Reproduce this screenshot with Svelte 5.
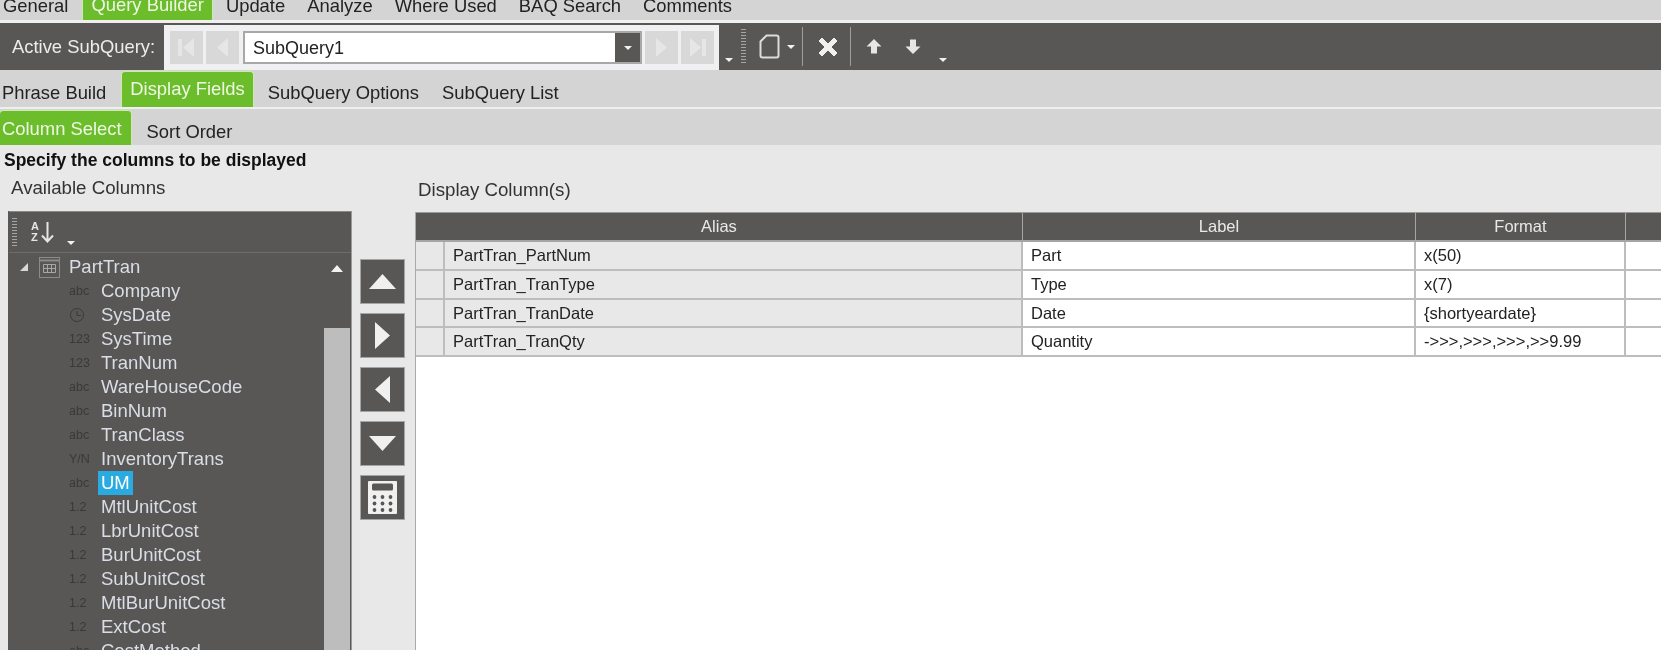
<script>
  const topTabs = ['General', 'Query Builder', 'Update', 'Analyze', 'Where Used', 'BAQ Search', 'Comments'];
  const subTabs = ['Phrase Build', 'Display Fields', 'SubQuery Options', 'SubQuery List'];
  const selectTabs = ['Column Select', 'Sort Order'];

  const columns = [
    ['abc', 'Company'], ['clock', 'SysDate'], ['123', 'SysTime'], ['123', 'TranNum'],
    ['abc', 'WareHouseCode'], ['abc', 'BinNum'], ['abc', 'TranClass'], ['Y/N', 'InventoryTrans'],
    ['abc', 'UM'], ['1.2', 'MtlUnitCost'], ['1.2', 'LbrUnitCost'], ['1.2', 'BurUnitCost'],
    ['1.2', 'SubUnitCost'], ['1.2', 'MtlBurUnitCost'], ['1.2', 'ExtCost'], ['abc', 'CostMethod']
  ];

  const rows = [
    ['PartTran_PartNum', 'Part', 'x(50)'],
    ['PartTran_TranType', 'Type', 'x(7)'],
    ['PartTran_TranDate', 'Date', '{shortyeardate}'],
    ['PartTran_TranQty', 'Quantity', '->>>,>>>,>>>,>>9.99']
  ];

  // calculator key positions
  const keys = [];
  for (const y of [16, 22.5, 29]) {
    for (const x of [6.5, 14.5, 22.5]) keys.push([x, y]);
  }
</script>

<div class="screen">
  <div class="tabs top">
    {#each topTabs as tab}
      <span class="tab" class:active={tab === 'Query Builder'}>{tab}</span>
    {/each}
  </div>

  <div class="toolbar">
    <span class="active-label">Active SubQuery:</span>
    <div class="picker">
      <span class="nav">
        <svg width="33" height="33" viewBox="0 0 33 33"><path d="M8 8h4v17H8zM24 7v19l-11-9.500z" fill="#e6e6e6" /></svg>
      </span>
      <span class="nav">
        <svg width="33" height="33" viewBox="0 0 33 33"><path d="M22 7v19l-11-9.500z" fill="#e6e6e6" /></svg>
      </span>
      <div class="combo">
        <span class="combo-text">SubQuery1</span>
        <span class="combo-btn"><i class="caret"></i></span>
      </div>
      <span class="nav">
        <svg width="33" height="33" viewBox="0 0 33 33"><path d="M11 7v19l11-9.500z" fill="#e6e6e6" /></svg>
      </span>
      <span class="nav">
        <svg width="33" height="33" viewBox="0 0 33 33"><path d="M9 7v19l11-9.500zM21 8h4v17h-4z" fill="#e6e6e6" /></svg>
      </span>
    </div>
    <i class="caret overflow first"></i>
    <span class="grip"></span>
    <svg class="doc" width="21" height="25" viewBox="0 0 21 25"><path d="M7.500 1.500h10q2 0 2 2v18q0 2-2 2h-14q-2 0-2-2V7.500z" fill="none" stroke="#dcdcdc" stroke-width="2" /></svg>
    <i class="caret doc-caret"></i>
    <span class="sep"></span>
    <svg class="close" width="24" height="24" viewBox="0 0 24 24"><path d="M3 6l3-3 6 6 6-6 3 3-6 6 6 6-3 3-6-6-6 6-3-3 6-6z" fill="#f0f0f0" stroke="#f0f0f0" stroke-linejoin="round" /></svg>
    <span class="sep"></span>
    <svg class="arrow-up" width="16" height="15" viewBox="0 0 16 15"><path d="M8 0l7.500 7.500H11V14.500H5V7.500H.5z" fill="#e6e6e6" /></svg>
    <svg class="arrow-down" width="16" height="15" viewBox="0 0 16 15"><path d="M5 .5h6v7h4.500L8 15 .5 7.500H5z" fill="#e6e6e6" /></svg>
    <i class="caret overflow last"></i>
  </div>

  <div class="tabs sub">
    {#each subTabs as tab}
      <span class="tab" class:active={tab === 'Display Fields'}>{tab}</span>
    {/each}
  </div>

  <div class="tabs select">
    {#each selectTabs as tab}
      <span class="tab" class:active={tab === 'Column Select'}>{tab}</span>
    {/each}
  </div>

  <div class="content">
    <div class="heading">Specify the columns to be displayed</div>
    <div class="panes">
      <div class="available">
        <div class="pane-title">Available Columns</div>
        <div class="tree">
          <div class="tree-bar">
            <span class="grip small"></span>
            <span class="az"><span>A</span><span>Z</span></span>
            <svg width="13" height="22" viewBox="0 0 13 22"><path d="M6.500 1v19M1 14.500l5.500 6 5.500-6" fill="none" stroke="#e6e6e6" stroke-width="2" /></svg>
            <i class="caret bar-caret"></i>
          </div>
          <div class="tree-body">
            <div class="tree-list">
              <div class="root">
                <svg class="twist" width="10" height="10" viewBox="0 0 10 10"><path d="M9 1v8H1z" fill="#d8d8d8" /></svg>
                <svg class="table-icon" width="21" height="21" viewBox="0 0 21 21">
                  <rect x=".5" y=".5" width="20" height="20" fill="none" stroke="#8d8b89" />
                  <path d="M.5 3.500h20" stroke="#8d8b89" stroke-width="2" />
                  <path d="M4.500 7.500h12v8h-12zM8.500 7.500v8M12.500 7.500v8M4.500 11.500h12" fill="none" stroke="#a9a7a5" />
                </svg>
                <span class="name">PartTran</span>
              </div>
              {#each columns as [type, name]}
                <div class="item">
                  <span class="type">
                    {#if type === 'clock'}
                      <svg width="16" height="16" viewBox="0 0 16 16"><circle cx="8" cy="8" r="6.500" fill="none" stroke="#3b3937" /><path d="M8 4v4.500h4" fill="none" stroke="#3b3937" /></svg>
                    {:else}
                      {type}
                    {/if}
                  </span>
                  <span class="name" class:selected={name === 'UM'}>{name}</span>
                </div>
              {/each}
            </div>
            <div class="scroll">
              <svg class="scroll-up" width="12" height="7" viewBox="0 0 12 7"><path d="M6 0l6 7H0z" fill="#f2f2f2" /></svg>
              <div class="thumb"></div>
            </div>
          </div>
        </div>
      </div>

      <div class="movers">
        <button aria-label="Up"><svg width="29" height="17" viewBox="0 0 29 17"><path d="M14.500 1L28 16H1z" fill="#f0f0f0" /></svg></button>
        <button aria-label="Add"><svg width="17" height="29" viewBox="0 0 17 29"><path d="M1 1l15 13.500L1 28z" fill="#f0f0f0" /></svg></button>
        <button aria-label="Remove"><svg width="17" height="29" viewBox="0 0 17 29"><path d="M16 1L1 14.500 16 28z" fill="#f0f0f0" /></svg></button>
        <button aria-label="Down"><svg width="29" height="17" viewBox="0 0 29 17"><path d="M1 1h27L14.500 16z" fill="#f0f0f0" /></svg></button>
        <button aria-label="Calculated field">
          <svg width="29" height="33" viewBox="0 0 29 33">
            <rect width="29" height="33" rx="1" fill="#f0f0f0" />
            <rect x="4" y="2.500" width="21" height="7" rx="1.500" fill="#595755" />
            {#each keys as [x, y]}
              <circle cx={x} cy={y} r="1.900" fill="#595755" />
            {/each}
          </svg>
        </button>
      </div>

      <div class="display">
        <div class="pane-title display-title">Display Column(s)</div>
        <div class="grid">
          <div class="row head">
            <span>Alias</span>
            <span>Label</span>
            <span>Format</span>
            <span></span>
          </div>
          {#each rows as [alias, label, format]}
            <div class="row">
              <span class="stub"></span>
              <span class="alias">{alias}</span>
              <span class="cell">{label}</span>
              <span class="cell">{format}</span>
              <span class="cell"></span>
            </div>
          {/each}
        </div>
      </div>
    </div>
  </div>
</div>

<style>
  :global(body) {
    margin: 0;
  }

  .screen {
    width: 1661px;
    height: 650px;
    overflow: hidden;
    display: flex;
    flex-direction: column;
    background: #e8e8e8;
    color: #222;
    font-family: "Liberation Sans", Arial, sans-serif;
    font-size: 18.400px;
    filter: blur(0.45px);
  }

  /* tab strips */
  .tabs {
    display: flex;
    align-items: flex-end;
    background: #d4d4d4;
    flex: none;
    overflow: hidden;
  }

  .tab {
    white-space: nowrap;
    line-height: 20px;
  }

  .tab.active {
    background: #6bbd2b;
    color: #eef7e4;
    border: 1px solid #cdeab0;
    border-bottom: none;
    border-radius: 4px 4px 0 0;
  }

  .top {
    height: 20px;
    border-bottom: 3px solid #efefef;
    padding-left: 3px;
  }

  .top .tab {
    margin-right: 22px;
    padding-bottom: 4px;
  }

  .top .tab.active {
    margin-left: -8px;
    margin-right: 13px;
    padding: 0 8px 5px;
  }

  .sub {
    height: 37px;
    border-bottom: 2px solid #efefef;
    padding-left: 2px;
  }

  .sub .tab {
    margin-right: 23px;
    padding-bottom: 4px;
  }

  .sub .tab.active {
    margin-left: -8px;
    margin-right: 14px;
    padding: 7px 8px 8px;
  }

  .select {
    height: 36px;
  }

  .select .tab {
    margin-left: 15px;
    padding-bottom: 3px;
  }

  .select .tab.active {
    margin-left: 0;
    padding: 8px 9px 6px 2px;
    border-left: none;
  }

  /* toolbar */
  .toolbar {
    height: 47px;
    flex: none;
    display: flex;
    background: #595755;
    align-items: center;
    color: #ececec;
  }

  .active-label {
    width: 152px;
    padding-left: 12px;
    white-space: nowrap;
  }

  .picker {
    width: 555px;
    height: 45px;
    margin-top: 2px;
    padding: 6px 4px 6px 6px;
    box-sizing: border-box;
    background: #f0f0f2;
    display: flex;
    align-items: flex-start;
  }

  .nav {
    width: 33px;
    height: 33px;
    background: #d8d8d8;
    margin-right: 3px;
    flex: none;
    display: block;
  }

  .nav svg {
    display: block;
  }

  .combo {
    width: 399px;
    height: 33px;
    margin: 0 3px 0 1px;
    box-sizing: border-box;
    border: 2px solid #a8a8a8;
    background: #fff;
    display: flex;
    flex: none;
  }

  .combo-text {
    flex: 1;
    padding-left: 8px;
    line-height: 30px;
    font-size: 18px;
    color: #222;
  }

  .combo-btn {
    width: 25px;
    background: #595755;
    display: flex;
    align-items: center;
    justify-content: center;
  }

  .caret {
    display: block;
    width: 0;
    height: 0;
    border-left: 4px solid transparent;
    border-right: 4px solid transparent;
    border-top: 4px solid #f2f2f2;
  }

  .overflow {
    align-self: flex-end;
    margin-bottom: 8px;
  }

  .overflow.first {
    margin-left: 6px;
  }

  .grip {
    width: 5px;
    height: 35px;
    margin-left: 8px;
    background: repeating-linear-gradient(#a5a5a5 0 1px, #595755 1px 3px);
  }

  .grip.small {
    height: 28px;
    margin-left: 3px;
  }

  .doc {
    margin-left: 13px;
  }

  .doc-caret {
    margin-left: 7px;
  }

  .sep {
    width: 1px;
    height: 39px;
    background: #a09e9c;
  }

  .doc-caret + .sep {
    margin-left: 7px;
  }

  .close {
    margin: 0 10px 0 13px;
  }

  .arrow-up {
    margin-left: 15px;
  }

  .arrow-down {
    margin-left: 23px;
  }

  .overflow.last {
    margin-left: 18px;
  }

  /* content */
  .content {
    flex: 1;
    min-height: 0;
    display: flex;
    flex-direction: column;
  }

  .heading {
    font-weight: bold;
    font-size: 17.500px;
    line-height: 20px;
    padding: 5px 0 0 4px;
    color: #111;
  }

  .panes {
    flex: 1;
    min-height: 0;
    display: flex;
  }

  .pane-title {
    line-height: 20px;
    font-size: 18.700px;
    color: #333;
    padding: 8px 0 0 3px;
    height: 33px;
    white-space: nowrap;
  }

  .available {
    width: 344px;
    margin-left: 8px;
    flex: none;
  }

  .tree {
    height: 500px;
    background: #595755;
    border-right: 1px solid #9a9a9a;
  }

  .tree-bar {
    height: 40px;
    margin-left: 1px;
    border-top: 1px solid #888;
    border-bottom: 1px solid #6f6d6b;
    display: flex;
    align-items: center;
  }

  .az {
    display: flex;
    flex-direction: column;
    margin-left: 14px;
    font-size: 11px;
    font-weight: bold;
    line-height: 11px;
    color: #e6e6e6;
  }

  .az + svg {
    margin-left: 2px;
  }

  .bar-caret {
    align-self: flex-end;
    margin: 0 0 7px 13px;
  }

  .tree-body {
    display: flex;
    justify-content: space-between;
    height: 460px;
  }

  .tree-list {
    padding-top: 2px;
  }

  .root,
  .item {
    display: flex;
    align-items: center;
    height: 24px;
    color: #d9dde6;
    white-space: nowrap;
    font-size: 18.500px;
  }

  .twist {
    margin-left: 11px;
  }

  .table-icon {
    margin-left: 10px;
  }

  .root .name {
    margin-left: 9px;
    padding: 0;
  }

  .type {
    width: 30px;
    margin-left: 60px;
    font-size: 12.500px;
    color: #3b3937;
    display: flex;
    padding-left: 1px;
    box-sizing: border-box;
  }

  .name {
    padding: 0 3px;
    line-height: 24px;
  }

  .name.selected {
    background: #29abe2;
    color: #fff;
  }

  .scroll {
    width: 26px;
    margin-right: 1px;
    position: relative;
  }

  .scroll-up {
    position: absolute;
    top: 12px;
    left: 7px;
  }

  .thumb {
    margin-top: 75px;
    height: 400px;
    background: #bdbdbd;
  }

  .movers {
    flex: none;
    width: 45px;
    margin: 89px 10px 0 8px;
    display: flex;
    flex-direction: column;
    gap: 9px;
  }

  .movers button {
    width: 45px;
    height: 45px;
    padding: 0;
    border: 1px solid #a5a5a5;
    background: #595755;
    display: flex;
    align-items: center;
    justify-content: center;
  }

  .display {
    flex: 1;
    min-width: 0;
  }

  .display-title {
    padding: 10px 0 0 3px;
    height: 32px;
  }

  .grid {
    height: 500px;
    background: #fff;
    border-left: 1px solid #aaa;
    font-size: 16.500px;
  }

  .row {
    display: grid;
    grid-template-columns: 29px 578px 393px 210px 1fr;
    height: 28.750px;
    box-sizing: border-box;
    border-bottom: 2px solid #bdbdbd;
    align-items: stretch;
    line-height: 26px;
  }

  .row > span {
    border-right: 2px solid #bdbdbd;
    white-space: nowrap;
  }

  .row > span:last-child {
    border-right: none;
  }

  .stub,
  .alias {
    background: #e8e8e8;
  }

  .alias,
  .cell {
    padding-left: 8px;
  }

  .head {
    grid-template-columns: 607px 393px 210px 1fr;
    height: 30px;
    background: #595755;
    color: #e8e8e8;
    border-top: 1px solid #9a9a9a;
    border-bottom: 2px solid #a5a5a5;
    text-align: center;
  }

  .head > span {
    border-right: 1px solid #a5a5a5;
  }
</style>
